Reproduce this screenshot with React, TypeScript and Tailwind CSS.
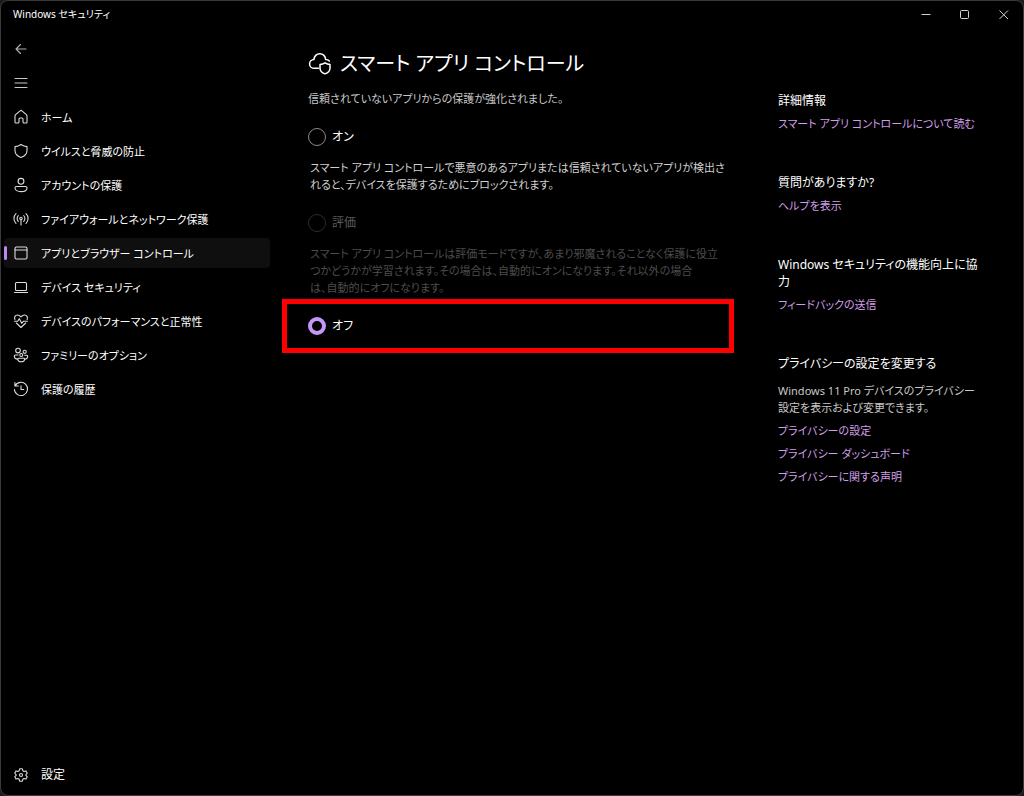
import React, { useState } from "react";

type IconProps = { children: React.ReactNode; className?: string };

function Icon({ children, className = "size-4" }: IconProps) {
  return (
    <svg
      aria-hidden="true"
      viewBox="0 0 16 16"
      className={className + " shrink-0"}
      fill="none"
      stroke="currentColor"
      strokeWidth="1.1"
      strokeLinecap="round"
      strokeLinejoin="round"
    >
      {children}
    </svg>
  );
}

const navItems: { label: string; icon: React.ReactNode; active?: boolean }[] = [
  {
    label: "ホーム",
    icon: <path d="M2 6.900c0-.5.2-.9.6-1.200l4.500-3.900c.5-.5 1.300-.5 1.800 0l4.500 3.900c.4.3.6.7.6 1.200v6.100c0 .6-.4 1-1 1h-2c-.6 0-1-.4-1-1V10c0-.6-.4-1-1-1H7c-.6 0-1 .4-1 1v3c0 .6-.4 1-1 1H3c-.6 0-1-.4-1-1z" />,
  },
  {
    label: "ウイルスと脅威の防止",
    icon: <path d="M8 1.500c1.700 1.300 3.600 2 6 2.100v4c0 3.400-2 5.600-6 6.900-4-1.300-6-3.500-6-6.900v-4c2.400-.1 4.300-.8 6-2.100z" />,
  },
  {
    label: "アカウントの保護",
    icon: (
      <>
        <circle cx="8" cy="4.300" r="2.900" />
        <path d="M3.500 9.500h9c.8 0 1.500.6 1.500 1.400 0 2.300-2.500 3.700-6 3.700s-6-1.400-6-3.700c0-.8.7-1.400 1.500-1.400z" />
      </>
    ),
  },
  {
    label: "ファイアウォールとネットワーク保護",
    icon: (
      <>
        <circle cx="8" cy="7.500" r="1.200" />
        <path d="M8 8.700V14M5.300 10.300a3.900 3.900 0 0 1 0-5.600M10.700 10.300a3.900 3.900 0 0 0 0-5.600M3 12.300a6.600 6.600 0 0 1 0-9.600M13 12.300a6.600 6.600 0 0 0 0-9.600" />
      </>
    ),
  },
  {
    label: "アプリとブラウザー コントロール",
    active: true,
    icon: (
      <>
        <rect x="2" y="2" width="12" height="12" rx="1.500" />
        <path d="M2 5h12" />
      </>
    ),
  },
  {
    label: "デバイス セキュリティ",
    icon: (
      <>
        <rect x="2.500" y="3.500" width="11" height="8" rx="1" />
        <path d="M1.500 13.500h13" />
      </>
    ),
  },
  {
    label: "デバイスのパフォーマンスと正常性",
    icon: (
      <>
        <path d="M1.900 6.500C.9 4.200 2.200 2 4.500 2c1.500 0 2.500.8 3.500 1.900C9 2.800 10 2 11.500 2c2.300 0 3.600 2.200 2.600 4.500M3.300 10 8 14.500l4.700-4.500" />
        <path d="M1.500 8.300h3.200l1.600-2.600 2.400 4.600 1.600-2h4.200" />
      </>
    ),
  },
  {
    label: "ファミリーのオプション",
    icon: (
      <>
        <circle cx="5" cy="3.600" r="2.300" />
        <circle cx="11.700" cy="4.800" r="1.600" />
        <circle cx="8.300" cy="8" r="1.500" />
        <path d="M5 8H2.300c-.6 0-1 .4-1 1 0 1.600 1.200 2.800 2.700 3.100M11.700 8.300h2c.6 0 1 .4 1 1 0 1.500-1 2.600-2.300 2.800M5.600 11.200h5.200c.5 0 .8.3.8.7 0 1.600-1.400 2.800-3.400 2.800s-3.400-1.200-3.400-2.800c0-.4.3-.7.8-.7z" />
      </>
    ),
  },
  {
    label: "保護の履歴",
    icon: (
      <>
        <path d="M1.900 1.500v3.500h3.400M2.100 4.900A6.600 6.600 0 1 1 1.400 8.500" />
        <path d="M8 4.800v3.700h2.700" />
      </>
    ),
  },
];

function Option({
  label,
  value,
  current,
  onSelect,
  disabled = false,
}: {
  label: string;
  value: string;
  current: string;
  onSelect: (value: string) => void;
  disabled?: boolean;
}) {
  return (
    <label className="flex h-5 w-fit items-center gap-1.5 text-xs leading-5 text-white has-disabled:text-[#5c5c5c]">
      <input
        type="radio"
        name="smart-app-control"
        value={value}
        checked={current === value}
        disabled={disabled}
        onChange={() => onSelect(value)}
        className="size-[18px] shrink-0 appearance-none rounded-full border border-[#8c8c8c] checked:border-4 checked:border-[#c895fa] disabled:border-[#2c2c2c]"
      />
      {label}
    </label>
  );
}

function AsideLink({ children }: { children: React.ReactNode }) {
  return (
    <a href="#" className="block w-fit text-[11px] leading-[17px] whitespace-nowrap text-[#cf9fe6] hover:underline">
      {children}
    </a>
  );
}

export default function App() {
  const [mode, setMode] = useState("off");

  return (
    <div className="min-h-screen bg-[#1c1c1c]">
      <div className="flex min-h-screen flex-col overflow-hidden rounded-lg border border-[#3a3a3a] bg-black font-['Noto_Sans','Noto_Sans_CJK_JP',sans-serif] text-xs leading-[17px] text-white [font-feature-settings:'palt']">
        <header className="flex h-[27px] items-center justify-between pl-3">
          <span className="text-[10px]">Windows セキュリティ</span>
          <div className="flex text-[#d0d0d0]">
            <button type="button" aria-label="最小化" className="grid h-[27px] w-[39px] place-items-center">
              <svg viewBox="0 0 10 10" className="size-2.5" stroke="currentColor"><path d="M0.500 4.500h9" /></svg>
            </button>
            <button type="button" aria-label="最大化" className="grid h-[27px] w-[39px] place-items-center">
              <svg viewBox="0 0 10 10" className="size-2.5" fill="none" stroke="currentColor"><rect x="0.500" y="0.500" width="8" height="8" rx="1" /></svg>
            </button>
            <button type="button" aria-label="閉じる" className="grid h-[27px] w-[39px] place-items-center">
              <svg viewBox="0 0 10 10" className="size-2.5" stroke="currentColor"><path d="M0.500 0.500l8.500 8.500M9 0.500l-8.500 8.500" /></svg>
            </button>
          </div>
        </header>

        <div className="flex flex-1 pt-0.5">
          <nav className="flex w-[269px] shrink-0 flex-col gap-1 pt-1 pb-[5px] pl-[3px] text-[11px]">
            <button type="button" aria-label="戻る" className="flex h-[30px] w-10 items-center pl-[9px] text-[#b0b0b0]">
              <Icon><path d="M13 8H3M7.500 3.500 3 8l4.500 4.500" /></Icon>
            </button>
            <button type="button" aria-label="メニュー" className="flex h-[30px] w-10 items-center pl-[9px] text-[#c8c8c8]">
              <Icon><path d="M2 3.500h12M2 8h12M2 12.500h12" /></Icon>
            </button>
            {navItems.map((item) => (
              <a
                key={item.label}
                href="#"
                aria-current={item.active ? "page" : undefined}
                className="group flex h-[30px] items-center rounded aria-[current=page]:bg-[#0f0f0f]"
              >
                <span className="mr-1.5 h-3.5 w-[3px] rounded-full group-aria-[current=page]:bg-[#b98aeb]" />
                <span className="mr-3 text-[#dcdcdc]"><Icon>{item.icon}</Icon></span>
                {item.label}
              </a>
            ))}
            <a href="#" className="mt-auto flex h-[30px] items-center gap-3 pl-[9px] text-xs">
              <Icon className="size-4 text-[#dcdcdc]">
                <path d="M6.700 1.800h2.600l.5 1.900 1.300.8 1.900-.6 1.300 2.300L12.900 7.600v.8l1.400 1.400-1.300 2.300-1.900-.6-1.300.8-.5 1.900H6.700l-.5-1.900-1.300-.8-1.900.6-1.300-2.300 1.400-1.400v-.8L1.700 6.200 3 3.900l1.900.6 1.300-.8z" />
                <circle cx="8" cy="8" r="1.500" />
              </Icon>
              設定
            </a>
          </nav>

          <main className="min-w-0 flex-1 pt-[18px] pl-3">
            <div className="px-[26px]">
              <h1 id="page-title" className="flex h-8 items-center gap-2 text-xl font-normal whitespace-nowrap">
                <svg viewBox="0 0 24 24" className="size-6 shrink-0" fill="none" stroke="currentColor" strokeWidth="1.500" strokeLinecap="round" strokeLinejoin="round" aria-hidden="true">
                  <path d="M10.500 16.300H6a4.400 4.400 0 0 1 0-8.800 5.800 5.800 0 0 1 11.600 0c1.600 0 2.900.5 3.800 1.500" />
                  <path d="M17 10.800c1.500 1 3.100 1.500 5 1.600v3.600c0 2.800-1.700 4.800-5 5.900-3.300-1.100-5-3.100-5-5.900v-3.600c1.900-.1 3.500-.6 5-1.600z" />
                </svg>
                スマート アプリ コントロール
              </h1>
              <p className="mt-2.5 text-[11px] leading-[17px] text-[#c8c8c8]">信頼されていないアプリからの保護が強化されました。</p>
            </div>

            <fieldset aria-labelledby="page-title" className="mt-5 min-w-0">
              <div className="px-[26px]">
                <Option label="オン" value="on" current={mode} onSelect={setMode} />
                <p className="mt-3 pl-0.5 text-[11px] leading-[17px] whitespace-nowrap text-[#d0d0d0]">
                  スマート アプリ コントロールで悪意のあるアプリまたは信頼されていないアプリが検出さ
                  <br />
                  れると、デバイスを保護するためにブロックされます。
                </p>
              </div>
              <div className="mt-5 px-[26px]">
                <Option label="評価" value="evaluation" current={mode} onSelect={setMode} disabled />
                <p className="mt-3 pl-0.5 text-[11px] leading-[17px] whitespace-nowrap text-[#4c4c4c]">
                  スマート アプリ コントロールは評価モードですが、あまり邪魔されることなく保護に役立
                  <br />
                  つかどうかが学習されます。その場合は、自動的にオンになります。それ以外の場合
                  <br />
                  は、自動的にオフになります。
                </p>
              </div>
              <div className="mt-[3px] flex h-[54px] items-center border-5 border-[#fe0000] pl-[21px]">
                <Option label="オフ" value="off" current={mode} onSelect={setMode} />
              </div>
            </fieldset>
          </main>

          <aside className="mr-10 ml-11 flex w-[205px] shrink-0 flex-col gap-[42px] pt-[62px]">
            <section className="flex flex-col gap-1.5">
              <h2>詳細情報</h2>
              <AsideLink>スマート アプリ コントロールについて読む</AsideLink>
            </section>
            <section className="flex flex-col gap-1.5">
              <h2>質問がありますか?</h2>
              <AsideLink>ヘルプを表示</AsideLink>
            </section>
            <section className="flex flex-col gap-1.5">
              <h2>Windows セキュリティの機能向上に協力</h2>
              <AsideLink>フィードバックの送信</AsideLink>
            </section>
            <section className="flex flex-col gap-1.5">
              <h2>プライバシーの設定を変更する</h2>
              <p className="mt-1 text-[11px] leading-[17px] whitespace-nowrap text-[#c8c8c8]">
                Windows 11 Pro デバイスのプライバシー
                <br />
                設定を表示および変更できます。
              </p>
              <AsideLink>プライバシーの設定</AsideLink>
              <AsideLink>プライバシー ダッシュボード</AsideLink>
              <AsideLink>プライバシーに関する声明</AsideLink>
            </section>
          </aside>
        </div>
      </div>
    </div>
  );
}
